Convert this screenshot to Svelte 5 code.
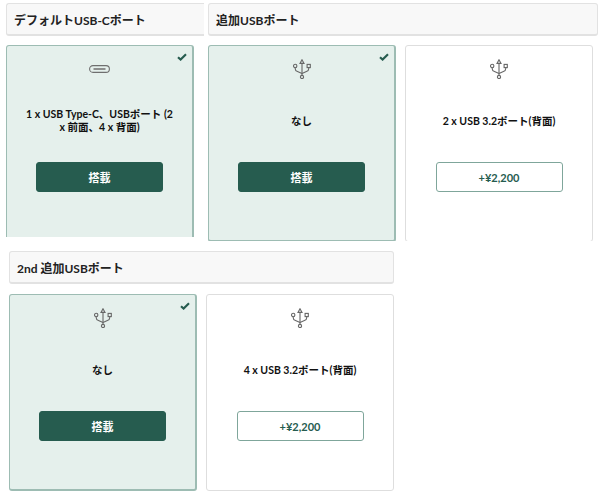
<script>
  const sections = [
    {
      id: "usbc",
      title: "デフォルトUSB-Cポート",
      options: [
        { icon: "typec", label: "1 x USB Type-C、USBポート (2 x 前面、4 x 背面)", selected: true },
      ],
    },
    {
      id: "usb",
      title: "追加USBポート",
      options: [
        { icon: "usb", label: "なし", selected: true },
        { icon: "usb", label: "2 x USB 3.2ポート(背面)", price: "+¥2,200" },
      ],
    },
    {
      id: "second",
      title: "2nd 追加USBポート",
      options: [
        { icon: "usb", label: "なし", selected: true },
        { icon: "usb", label: "4 x USB 3.2ポート(背面)", price: "+¥2,200" },
      ],
    },
  ];
</script>

{#snippet section(s)}
  <section class="section {s.id}">
    <h3>{s.title}</h3>
    <div class="cards">
      {#each s.options as opt}
        <div class="card" class:selected={opt.selected}>
          {#if opt.selected}
            <svg class="check" width="10" height="8" viewBox="0 0 10 8">
              <path d="M1 4.2 3.6 6.6 9 1.2" fill="none" stroke="#265c4f" stroke-width="2.1" />
            </svg>
          {/if}
          <div class="icon">
            {#if opt.icon === "typec"}
              <svg width="21" height="8" viewBox="0 0 21 8" fill="none" stroke="#6f6f6f">
                <rect x="0.6" y="0.6" width="19.8" height="6.8" rx="3.4" stroke-width="1.1" />
                <path d="M4.5 4h12" stroke-width="1.5" />
              </svg>
            {:else}
              <svg width="18" height="20" viewBox="0 0 18 20" fill="none" stroke="#666" stroke-width="1.1">
                <path d="M9 4.5v12.6" />
                <path d="M9 .8 7 4.4h4z" />
                <circle cx="9" cy="18" r="1.6" />
                <circle cx="2.2" cy="7" r="1.7" />
                <rect x="14.1" y="5.4" width="3.2" height="3.2" />
                <path d="M2.2 8.7v1c0 1.6.9 2.4 2.3 2.9L9 14.6" />
                <path d="M15.7 8.6v1.1c0 1.6-.9 2.4-2.3 2.9L9 14.6" />
              </svg>
            {/if}
          </div>
          <p class="label">{opt.label}</p>
          {#if opt.price}
            <button class="btn price">{opt.price}</button>
          {:else}
            <button class="btn fitted">搭載</button>
          {/if}
        </div>
      {/each}
    </div>
  </section>
{/snippet}

<div class="page">
  <div class="top">
    {@render section(sections[0])}
    {@render section(sections[1])}
  </div>
  {@render section(sections[2])}
</div>

<style>
  :global(body) {
    background: #fff;
  }

  .page {
    width: 600px;
    height: 500px;
    padding: 3px 0 0 6px;
    box-sizing: border-box;
    overflow: hidden;
    font-family: Lato, "Noto Sans CJK JP", sans-serif;
    color: #111;
  }

  .top {
    display: flex;
    gap: 4px;
  }

  .section {
    overflow: hidden;
    flex: none;
  }

  .usbc {
    width: 198px;
    height: 234px;
  }

  .usb {
    width: 390px;
    height: 238px;
  }

  .second {
    width: 385px;
    margin: 10px 0 0 3px;
  }

  .second h3 {
    margin-bottom: 10px;
  }

  h3 {
    margin: 0 0 9px;
    height: 33px;
    box-sizing: border-box;
    display: flex;
    align-items: center;
    padding-left: 7px;
    font-size: 12px;
    font-weight: 700;
    background: #f8f8f8;
    border: 1px solid #e2e2e2;
    border-bottom-width: 2px;
    border-radius: 3px;
    color: #222;
  }

  .usbc h3 {
    border-right: none;
    border-radius: 3px 0 0 3px;
  }

  .cards {
    display: flex;
    gap: 9px;
  }

  .card {
    position: relative;
    width: 188px;
    height: 197px;
    flex: none;
    box-sizing: border-box;
    display: flex;
    flex-direction: column;
    align-items: center;
    background: #fff;
    border: 1px solid #dedede;
    border-radius: 3px;
  }

  .card.selected {
    background: #e5f0ec;
    border-color: #9dbcb3;
    border-right-width: 2px;
    border-bottom-width: 2px;
  }

  .check {
    position: absolute;
    top: 7px;
    right: 5px;
  }

  .icon {
    height: 22px;
    margin-top: 12px;
    display: flex;
    align-items: center;
    justify-content: center;
  }

  .label {
    margin: 0;
    height: 82px;
    width: 152px;
    display: flex;
    align-items: center;
    justify-content: center;
    text-align: center;
    font-size: 10.5px;
    font-weight: 700;
    line-height: 13px;
  }

  .btn {
    width: 127px;
    height: 30px;
    box-sizing: border-box;
    font-family: inherit;
    font-size: 11px;
    font-weight: 700;
    border-radius: 3px;
    padding: 0;
  }

  .fitted {
    background: #265c4f;
    border: 1px solid #265c4f;
    color: #fff;
  }

  .price {
    background: #fff;
    border: 1px solid #7fa69b;
    color: #265c4f;
  }
</style>
